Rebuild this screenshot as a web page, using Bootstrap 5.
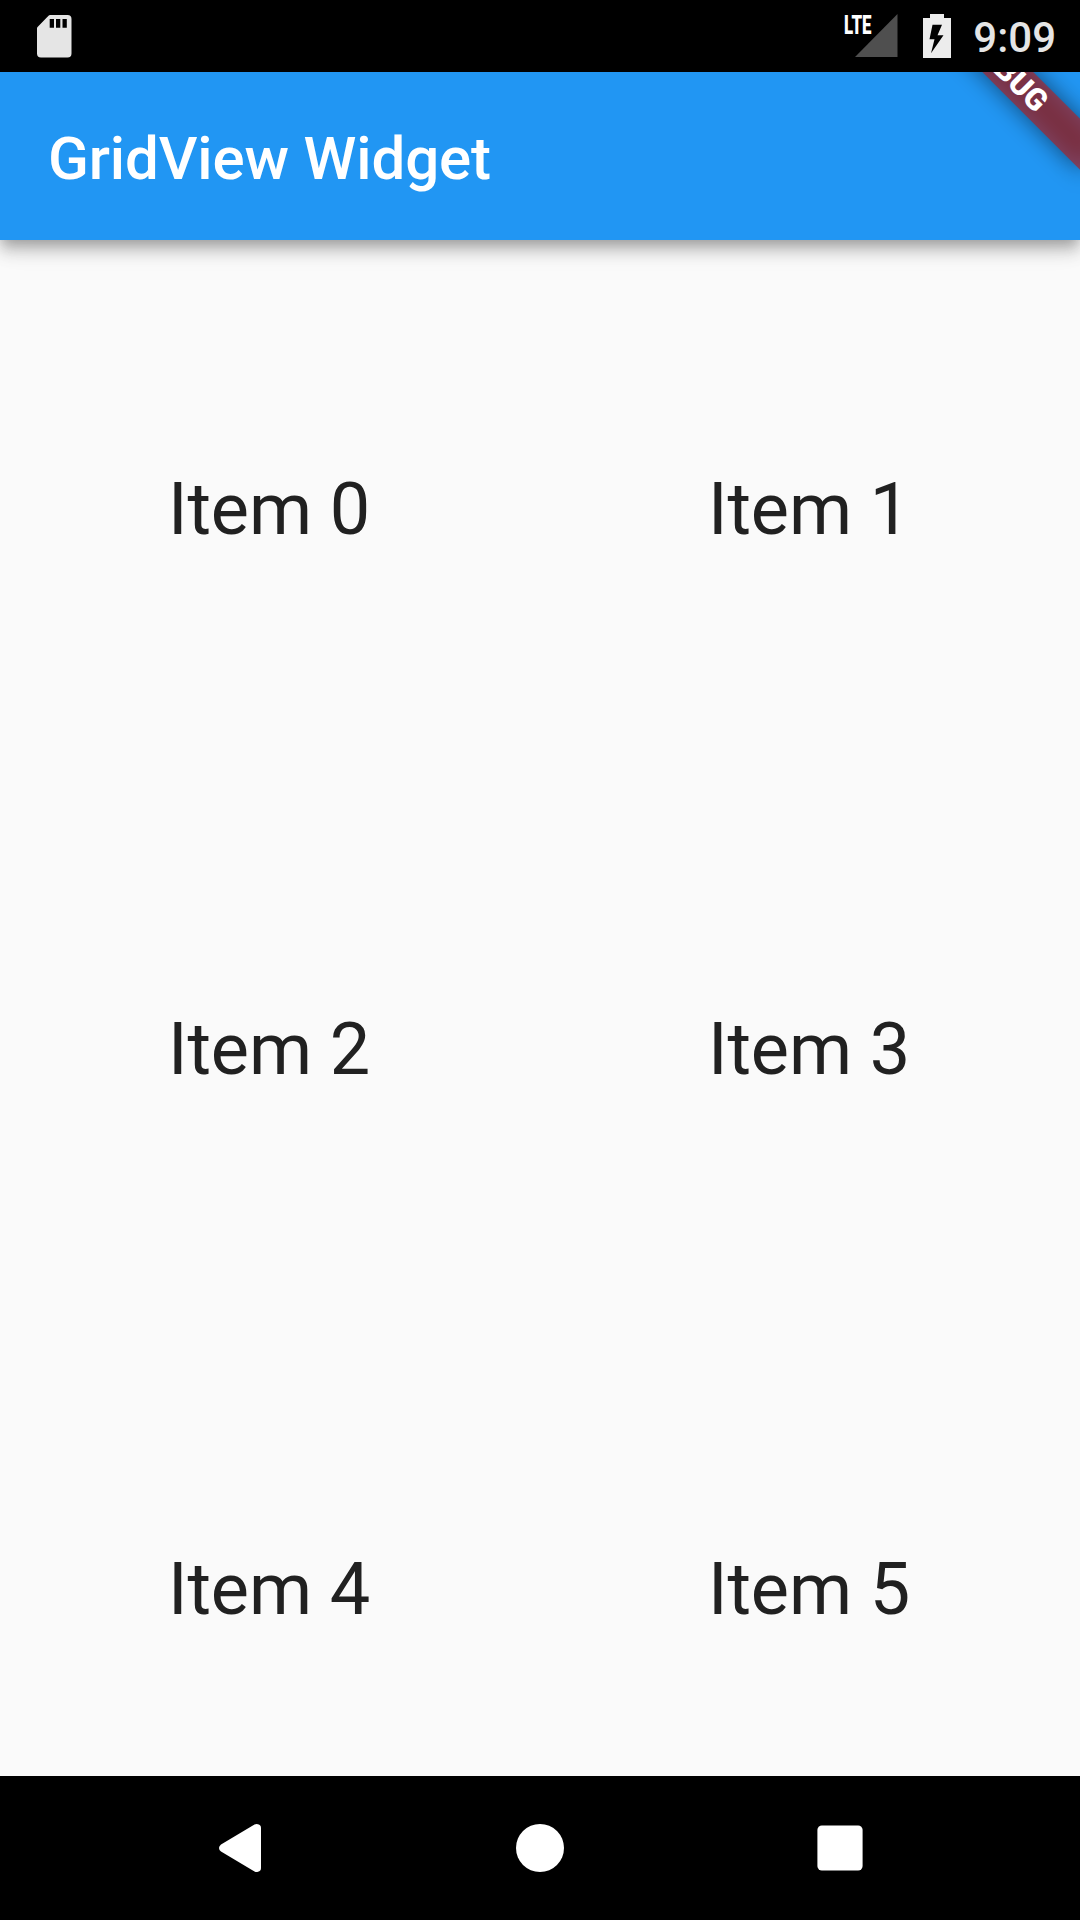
<!DOCTYPE html>
<html lang="en">
<head>
<meta charset="utf-8">
<meta name="viewport" content="width=device-width, initial-scale=1">
<title>GridView Widget</title>
<link href="https://cdn.jsdelivr.net/npm/bootstrap@5.3.0/dist/css/bootstrap.min.css" rel="stylesheet">
<style>
  body { font-family: Roboto, "Liberation Sans", sans-serif; background: #fafafa; }
  .status-bar { height: 72px; padding: 0 24px 0 37px; background: #000; z-index: 3; }
  .status-bar svg { display: block; }
  .sd-icon { margin-top: 15px; }
  .clock { font-size: 42px; line-height: 72px; font-weight: 500; color: #e5e5e5; margin-left: 22px; padding-top: 2px; }
  .lte { font-weight: 900; font-size: 26px; }
  .app-bar { height: 168px; padding: 6px 48px 0; background: #2196f3; z-index: 2;
    box-shadow: 0 12px 15px rgba(0,0,0,.16), 0 6px 12px -3px rgba(0,0,0,.22), 0 3px 30px rgba(0,0,0,.1); }
  .app-title { font-size: 60px; font-weight: 500; line-height: 70px; letter-spacing: -.13px; }
  .ribbon-clip { inset: 0; }
  .ribbon { left: 100%; top: -72px; width: 0; height: 0; transform: rotate(45deg); transform-origin: 0 0; }
  .ribbon-shade, .ribbon-band { left: -120px; top: 84px; width: 240px; height: 36px; }
  .ribbon-shade { background: rgba(0,0,0,.5); filter: blur(11.9px); }
  .ribbon-band { background: rgba(183,28,28,.627); font-size: 30.6px; font-weight: 900; line-height: 36px; }
  .grid-area { height: 1536px; }
  .grid-tile { height: 540px; font-size: 72px; line-height: 84px; color: #212121; letter-spacing: -.1px; padding-right: 2px; }
  .nav-keys { height: 144px; padding: 0 90px; background: #000; }
</style>
<script src="https://cdn.jsdelivr.net/npm/bootstrap@5.3.0/dist/js/bootstrap.bundle.min.js"></script>
</head>
<body>
<div class="d-flex flex-column vh-100 overflow-hidden">
  <header class="status-bar position-relative d-flex justify-content-between flex-shrink-0">
    <svg class="sd-icon" width="35" height="43" viewBox="0 0 35 43">
      <path fill="#e5e5e5" d="M13 0H30.500Q34.500 0 34.500 4V38.500Q34.500 42.500 30.500 42.500H4Q0 42.500 0 38.500V13.500Q0 12.500 .8 11.700L11.500 .8Q12.300 0 13 0Z"/>
      <path fill="#000" d="M12.700 4h4.300v8.700h-4.300zM19 4h4.300v8.700h-4.300zM25.500 4h4.300v8.700h-4.300z"/>
    </svg>
    <div class="d-flex">
      <svg width="108" height="72" viewBox="0 0 108 72">
        <path fill="#4f4f4f" d="M54.500 14V57H12Z"/>
        <text class="lte" x="1" y="33.700" fill="#fff" textLength="27.500" lengthAdjust="spacingAndGlyphs">LTE</text>
        <path fill="#ececec" fill-rule="evenodd" d="M80 18H87V14H101V18H108V58H80ZM89.500 24.700L86.500 39.200H91.500L88 53.200L100.500 35.200H94.500L99 24.700Z"/>
      </svg>
      <div class="clock">9:09</div>
    </div>
  </header>

  <div class="app-bar position-relative d-flex align-items-center flex-shrink-0">
    <h1 class="app-title text-white m-0">GridView Widget</h1>
    <div class="ribbon-clip position-absolute overflow-hidden">
      <div class="ribbon position-absolute">
        <div class="ribbon-shade position-absolute"></div>
        <div class="ribbon-band position-absolute text-white text-center">DEBUG</div>
      </div>
    </div>
  </div>

  <main class="grid-area overflow-hidden flex-shrink-0">
    <div class="row row-cols-2 g-0">
      <div class="col grid-tile d-flex align-items-center justify-content-center">Item 0</div>
      <div class="col grid-tile d-flex align-items-center justify-content-center">Item 1</div>
      <div class="col grid-tile d-flex align-items-center justify-content-center">Item 2</div>
      <div class="col grid-tile d-flex align-items-center justify-content-center">Item 3</div>
      <div class="col grid-tile d-flex align-items-center justify-content-center">Item 4</div>
      <div class="col grid-tile d-flex align-items-center justify-content-center">Item 5</div>
    </div>
  </main>

  <nav class="nav-keys d-flex flex-shrink-0">
    <div class="flex-fill d-flex align-items-center justify-content-center">
      <svg width="48" height="48" viewBox="0 0 48 48"><path fill="#fff" d="M38.500 .6Q40 -.3 42 .2Q45 .8 45 4V44Q45 47.200 42 47.800Q40 48.300 38.500 47.400L5 27.500Q3 26 3 24Q3 22 5 20.500Z"/></svg>
    </div>
    <div class="flex-fill d-flex align-items-center justify-content-center">
      <svg width="48" height="48" viewBox="0 0 48 48"><circle cx="24" cy="24" r="24" fill="#fff"/></svg>
    </div>
    <div class="flex-fill d-flex align-items-center justify-content-center">
      <svg width="48" height="48" viewBox="0 0 48 48"><rect x="1.400" y="1.400" width="45.200" height="45.200" rx="4.500" fill="#fff"/></svg>
    </div>
  </nav>
</div>
</body>
</html>
